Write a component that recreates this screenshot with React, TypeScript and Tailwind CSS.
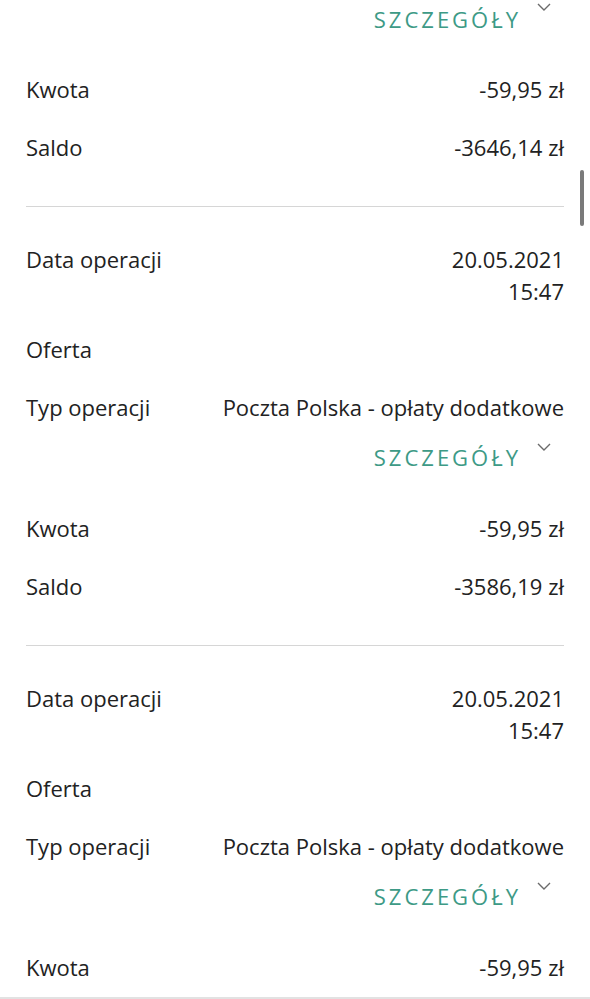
import React from "react";

const font = { fontFamily: '"Open Sans", "Noto Sans", sans-serif' };

function Chevron() {
  return (
    <svg width="14" height="8" viewBox="0 0 14 8" className="absolute right-[-30px] top-[4px]">
      <path d="M1 1 L7 7 L13 1" fill="none" stroke="#6b6b6b" strokeWidth="1.4" />
    </svg>
  );
}

function Details({ first }: { first?: boolean }) {
  return (
    <div className="h-[63px] flex justify-end pr-[43px]">
      <div
        className={`relative text-[22px] leading-[32px] tracking-[3px] text-[#3d9a86] ${
          first ? "mt-[-1px] pt-[4px]" : "pt-[2px]"
        }`}
      >
        SZCZEGÓŁY
        <Chevron />
      </div>
    </div>
  );
}

function Row({ label, value }: { label: string; value: React.ReactNode }) {
  return (
    <div className="flex justify-between items-start pt-[10px] pb-[16px] text-[22px] leading-[32px] text-[#222]">
      <span>{label}</span>
      <span className="text-right">{value}</span>
    </div>
  );
}

function Section({ saldo, last }: { saldo: string; last?: boolean }) {
  return (
    <>
      <div className="h-[26px]" />
      <Row
        label="Data operacji"
        value={
          <>
            20.05.2021
            <br />
            15:47
          </>
        }
      />
      <Row label="Oferta" value="" />
      <Row label="Typ operacji" value="Poczta Polska - opłaty dodatkowe" />
      <Details />
      <Row label="Kwota" value="-59,95 zł" />
      {!last && (
        <>
          <Row label="Saldo" value={saldo} />
          <div className="h-[27px]" />
          <div className="h-px bg-[#d6d6d6]" />
        </>
      )}
    </>
  );
}

export default function App() {
  return (
    <div style={font} className="relative w-[590px] h-[999px] overflow-hidden bg-white">
      <div className="pl-[26px] pr-[26px]">
        <Details first />
        <Row label="Kwota" value="-59,95 zł" />
        <Row label="Saldo" value="-3646,14 zł" />
        <div className="h-[27px]" />
        <div className="h-px bg-[#d6d6d6]" />
        <Section saldo="-3586,19 zł" />
        <Section saldo="" last />
      </div>
      <div className="absolute right-[6px] top-[170px] w-[4px] h-[56px] rounded-full bg-[#7a7a7a]" />
      <div className="absolute left-0 right-0 bottom-0 h-[2px] bg-[#e2e2e2]" />
    </div>
  );
}
